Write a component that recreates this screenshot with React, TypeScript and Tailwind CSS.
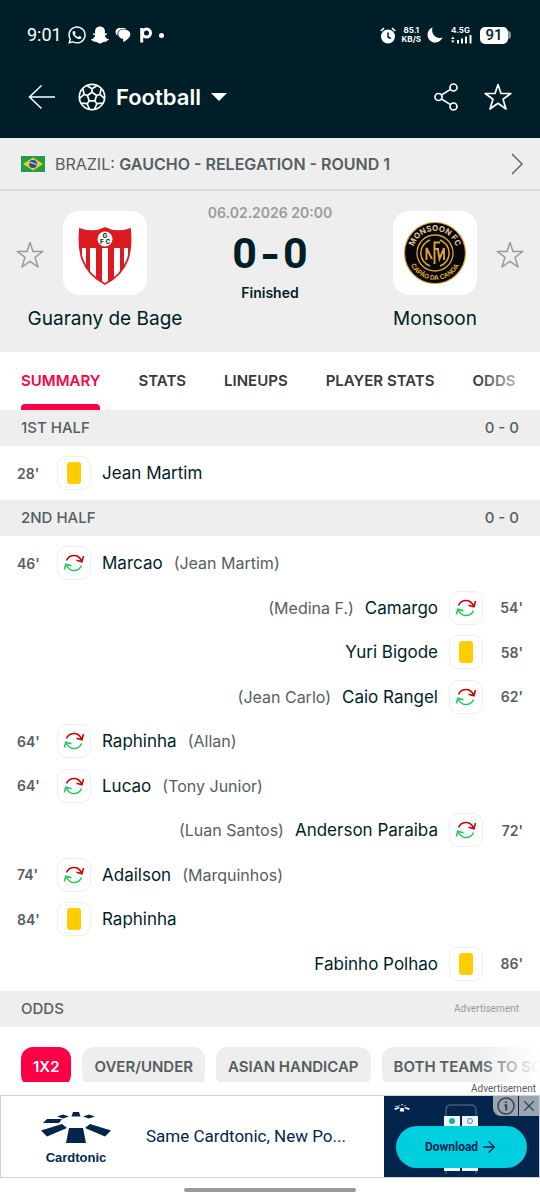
import type { ReactNode } from "react";
import { FaSnapchatGhost, FaWhatsapp } from "react-icons/fa";
import { ArrowRight, X } from "lucide-react";

type EventKind = "card" | "sub";

type MatchEvent = {
  minute: number;
  kind: EventKind;
  player: string;
  out?: string;
  away?: boolean;
};

const firstHalf: MatchEvent[] = [
  { minute: 28, kind: "card", player: "Jean Martim" },
];

const secondHalf: MatchEvent[] = [
  { minute: 46, kind: "sub", player: "Marcao", out: "Jean Martim" },
  { minute: 54, kind: "sub", player: "Camargo", out: "Medina F.", away: true },
  { minute: 58, kind: "card", player: "Yuri Bigode", away: true },
  { minute: 62, kind: "sub", player: "Caio Rangel", out: "Jean Carlo", away: true },
  { minute: 64, kind: "sub", player: "Raphinha", out: "Allan" },
  { minute: 64, kind: "sub", player: "Lucao", out: "Tony Junior" },
  { minute: 72, kind: "sub", player: "Anderson Paraiba", out: "Luan Santos", away: true },
  { minute: 74, kind: "sub", player: "Adailson", out: "Marquinhos" },
  { minute: 84, kind: "card", player: "Raphinha" },
  { minute: 86, kind: "card", player: "Fabinho Polhao", away: true },
];

const tabs = ["SUMMARY", "STATS", "LINEUPS", "PLAYER STATS", "ODDS"];
const markets = ["1X2", "OVER/UNDER", "ASIAN HANDICAP", "BOTH TEAMS TO SCORE"];

const Star = ({ className }: { className?: string }) => (
  <svg viewBox="0 0 28 28" className={className} fill="none" stroke="currentColor" strokeLinejoin="round">
    <path d="M14 1.5 L17 10.4 L26.8 10.5 L19 16.300 L22 26 L14 20.300 L6 26 L9 16.300 L1.200 10.500 L11 10.400 Z" />
  </svg>
);

const Ball = () => (
  <svg viewBox="0 0 28 28" className="w-7 h-7" fill="none" stroke="currentColor" strokeWidth="1.700" strokeLinejoin="round">
    <circle cx="14" cy="14" r="12.700" />
    <path d="M14 9.200 L18.600 12.500 L16.800 17.900 H11.200 L9.400 12.500 Z" />
    {[0, 72, 144, 216, 288].map((angle) => (
      <path key={angle} d="M14 9.200 V5.700 M8.800 2.600 L14 5.700 L19.200 2.600" transform={`rotate(${angle} 14 14)`} />
    ))}
  </svg>
);

const StatusBar = () => (
  <div className="flex items-center justify-between pl-[27px] pr-[29px] h-6">
    <div className="flex items-center">
      <span className="text-[18px] leading-6 font-['Roboto'] w-10">9:01</span>
      <FaWhatsapp className="w-5 h-5" />
      <FaSnapchatGhost className="w-[18px] h-[18px] ml-1" />
      <svg viewBox="0 0 16 16" className="w-4 h-4 ml-1.5" fill="currentColor">
        <path d="M5 1 C2 1 .3 3 .6 5.500 C.8 7 1.500 8 2.600 8.800 C2 5 4 2.500 7.500 2 L11.500 2 C10.500 1.300 9 1 7.500 1 Z" />
        <path d="M8.500 2.500 C5 2.500 3.300 4.500 3.300 7.200 C3.300 10 5.500 11.600 8 11.700 L8.300 15 C12 13 15.300 10.500 15.300 7 C15.300 4.300 12.500 2.500 8.500 2.500 Z" />
      </svg>
      <svg viewBox="0 0 14 16" className="w-3.5 h-4 ml-2" fill="none" stroke="currentColor">
        <path d="M2.700 15.500 V1" strokeWidth="3" />
        <circle cx="7.500" cy="6" r="4" strokeWidth="3" />
      </svg>
      <span className="w-[5px] h-[5px] rounded-full bg-white ml-1.5" />
    </div>
    <div className="flex items-center">
      <svg viewBox="0 0 16 17" className="w-4 h-[17px]" fill="none" stroke="currentColor">
        <circle cx="8" cy="9.500" r="7" fill="currentColor" stroke="none" />
        <path d="M.8 4 L4 1.200 M15.200 4 L12 1.200" strokeWidth="1.600" />
        <path d="M8 5.500 V10 L10.800 11.500" stroke="#001e28" strokeWidth="1.500" />
      </svg>
      <span className="flex flex-col items-center font-['Inter'] font-bold text-[8px] leading-[9px] ml-1.5">
        <span>85.1</span>
        <span>KB/S</span>
      </span>
      <svg viewBox="0 0 16 16" className="w-4 h-4 ml-1.5" fill="currentColor">
        <path d="M5.500 .5 C2.500 1.500 .5 4.500 .5 7.700 C.5 12 3.900 15.500 8.200 15.500 C11.600 15.500 14.400 13.300 15.500 10.500 C10 12.500 3.500 8 5.500 .5 Z" />
      </svg>
      <span className="flex flex-col ml-2 w-[21px]">
        <span className="font-['Inter'] font-bold text-[8px] leading-[9px]">4.5G</span>
        <svg viewBox="0 0 21 9" className="w-[21px] h-[9px]" fill="currentColor">
          <path d="M0 4 L1.800 1.500 L3.600 4 Z M0 5.500 L1.800 8 L3.600 5.500 Z M6 5 H8 V8.500 H6 Z M10 3.500 H12 V8.500 H10 Z M14 1.500 H16 V8.500 H14 Z M18.500 0 H20.500 V8.500 H18.500 Z" />
        </svg>
      </span>
      <span className="flex items-center ml-2">
        <span className="w-7 h-[17px] rounded-[5px] bg-white text-[#001e28] text-[15px] leading-[17px] font-medium text-center font-['Roboto']">91</span>
        <span className="w-[3px] h-2 rounded-r bg-[#7f8e93]" />
      </span>
    </div>
  </div>
);

const AppBar = () => (
  <div className="flex items-center px-7 h-8 mt-[34px]">
    <button aria-label="Back">
      <svg viewBox="0 0 28 26" className="w-7 h-[26px]" fill="none" stroke="currentColor" strokeWidth="1.500">
        <path d="M13.500 1.500 L1.500 13 L13.500 24.500 M1.500 13 H27" />
      </svg>
    </button>
    <button className="flex items-center ml-[22px]">
      <Ball />
      <span className="text-[22px] leading-8 font-semibold ml-2.5">Football</span>
      <svg viewBox="0 0 16 8" className="w-4 h-2 ml-2.5" fill="currentColor">
        <path d="M0 0 H16 L8 8 Z" />
      </svg>
    </button>
    <button aria-label="Share" className="ml-auto">
      <svg viewBox="0 0 24 28" className="w-6 h-7" fill="none" stroke="currentColor" strokeWidth="1.700">
        <circle cx="4.500" cy="14" r="3.500" />
        <circle cx="19.500" cy="4.500" r="3.500" />
        <circle cx="19.500" cy="23.500" r="3.500" />
        <path d="M7.500 12 L16.500 6.400 M7.500 16 L16.500 21.600" />
      </svg>
    </button>
    <button aria-label="Add match to favourites" className="ml-[26px]">
      <Star className="w-7 h-7 stroke-[1.700]" />
    </button>
  </div>
);

const Flag = () => (
  <svg viewBox="0 0 24 16" className="w-6 h-4">
    <path d="M0 0 H24 V16 H0 Z" fill="#229e45" />
    <path d="M12 1.500 L22 8 L12 14.500 L2 8 Z" fill="#e8d02c" />
    <circle cx="12" cy="8" r="4" fill="#2b49a3" />
    <path d="M8.300 6.800 C11 6.400 14 7.500 15.700 9.300" stroke="#fff" fill="none" />
  </svg>
);

const GuaranyCrest = () => (
  <svg viewBox="0 0 54 58" className="w-[54px] h-[58px] mt-1.5">
    <clipPath id="shield">
      <path d="M2 2 Q15 7 27 1 Q39 7 52 2 C54 23 52 44 27 57 C2 44 0 23 2 2 Z" />
    </clipPath>
    <g clipPath="url(#shield)">
      <path d="M0 0 H54 V58 H0 Z" fill="#dc1a22" />
      <path d="M4 21 H8 V58 H4 Z M12 21 H18 V58 H12 Z M24 21 H30 V58 H24 Z M36 21 H42 V58 H36 Z M46 21 H50 V58 H46 Z" fill="#fff" />
    </g>
    <path d="M2 2 Q15 7 27 1 Q39 7 52 2 C54 23 52 44 27 57 C2 44 0 23 2 2 Z" fill="none" stroke="#dc1a22" strokeWidth="1.800" />
    <circle cx="27" cy="12" r="7.500" fill="#fff" />
    <g fontSize="6.500" fontWeight="700" fontFamily="Inter, sans-serif" textAnchor="middle" fill="#1a1a1a">
      <text x="27" y="11">G</text>
      <text x="24" y="17">F</text>
      <text x="30" y="17">C</text>
    </g>
  </svg>
);

const MonsoonCrest = () => (
  <svg viewBox="0 0 64 64" className="w-16 h-16">
    <circle cx="32" cy="32" r="30.500" fill="#080706" stroke="#d9a43a" strokeWidth="1.200" />
    <path id="crest-top" d="M10 32 A22 22 0 0 1 54 32" fill="none" />
    <path id="crest-bottom" d="M5 32 A27 27 0 0 0 59 32" fill="none" />
    <g fontWeight="700" fontFamily="Inter, sans-serif" textAnchor="middle">
      <text fontSize="8" fill="#e0c9a0">
        <textPath href="#crest-top" startOffset="50%">MONSOON FC</textPath>
      </text>
      <text fontSize="6.500" fill="#d9a43a">
        <textPath href="#crest-bottom" startOffset="50%">CAPÃO DA CANOA</textPath>
      </text>
    </g>
    <g fill="none" stroke="#d9a43a">
      <circle cx="32" cy="32" r="18" strokeWidth="1.300" />
      <path d="M27 19 A13.800 13.800 0 0 0 27 45 M37 19 A13.800 13.800 0 0 1 37 45" strokeWidth="1.500" />
      <path d="M23.500 39 V27 L29 38 M31.500 43 V21.500 H37 M31.500 28 H36 M35 29 L36.500 38 L41 27 V39" strokeWidth="1.900" />
    </g>
  </svg>
);

const Team = ({ name, crest }: { name: string; crest: ReactNode }) => (
  <div className="flex flex-col items-center w-[168px]">
    <div className="w-[84px] h-[84px] rounded-2xl bg-white flex items-center justify-center">{crest}</div>
    <span className="text-[19px] leading-6 mt-3 whitespace-nowrap">{name}</span>
  </div>
);

const MatchHeader = () => (
  <section className="relative flex justify-between px-[21px] pt-5 pb-[21px]">
    <Team name="Guarany de Bage" crest={<GuaranyCrest />} />
    <div className="flex flex-col items-center -mt-2">
      <span className="text-[14px] leading-5 font-semibold text-[#999b9c]">06.02.2026 20:00</span>
      <span className="flex gap-[3px] text-[43px] leading-[60px] font-bold">
        <span className="font-['Roboto']">0</span>
        <span>-</span>
        <span className="font-['Roboto']">0</span>
      </span>
      <span className="text-[14px] leading-5 font-semibold">Finished</span>
    </div>
    <Team name="Monsoon" crest={<MonsoonCrest />} />
    <button aria-label="Follow Guarany de Bage" className="absolute left-4 top-[50px] text-[#999b9c]">
      <Star className="w-7 h-7 stroke-[1.500]" />
    </button>
    <button aria-label="Follow Monsoon" className="absolute right-4 top-[50px] text-[#999b9c]">
      <Star className="w-7 h-7 stroke-[1.500]" />
    </button>
  </section>
);

const SectionBar = ({ title, children }: { title: string; children: ReactNode }) => (
  <div className="flex items-center justify-between h-9 px-[21px] bg-[#eeeeee] text-[15px] leading-5 font-medium text-[#555e61]">
    <h2>{title}</h2>
    {children}
  </div>
);

const EventIcon = ({ kind }: { kind: EventKind }) => (
  <span className="w-[34px] h-[34px] rounded-[10px] border border-[#eeeeee] flex items-center justify-center shrink-0">
    {kind === "card" ? (
      <span className="w-3.5 h-[22px] rounded-[3px] bg-[#ffcd00]" />
    ) : (
      <svg viewBox="0 0 22 18" className="w-[22px] h-[18px]" fill="none" strokeWidth="1.500">
        <path d="M3.500 6.500 C6 .5 14.500 -1 18.500 6.500 M20.500 2 L19 7.800 L13.500 6.200" stroke="#c80000" />
        <path d="M18.500 11.500 C16 17.500 7.500 19 3.500 11.500 M1.300 15.500 L2.800 10.200 L8.500 11.800" stroke="#1fc65a" />
      </svg>
    )}
  </span>
);

const EventRow = ({ event }: { event: MatchEvent }) => (
  <li className={`flex items-center px-[17px] h-11 even:h-[45px] ${event.away ? "flex-row-reverse" : ""}`}>
    <span className={`w-10 text-[14px] font-semibold text-[#555e61] ${event.away ? "text-right" : ""}`}>
      {event.minute}'
    </span>
    <EventIcon kind={event.kind} />
    <span className="text-[17px] leading-6 mx-[11px]">{event.player}</span>
    {event.out && <span className="text-[16px] leading-6 text-[#555e61]">({event.out})</span>}
  </li>
);

const EventList = ({ events }: { events: MatchEvent[] }) => (
  <ul className="py-[5px]">
    {events.map((event) => (
      <EventRow key={`${event.minute}-${event.player}`} event={event} />
    ))}
  </ul>
);

const Tabs = () => (
  <nav className="relative flex gap-[38px] px-[21px] h-[58px] bg-white overflow-hidden">
    {tabs.map((tab, i) => (
      <a
        key={tab}
        href="#"
        className={`relative text-[15px] leading-[58px] font-semibold whitespace-nowrap ${i === 0 ? "text-[#ff0046]" : "text-[#37383c]"}`}
      >
        {tab}
        {i === 0 && <span className="absolute inset-x-0 bottom-0 h-1.5 rounded-t bg-[#ff0046]" />}
      </a>
    ))}
    <span className="absolute right-0 inset-y-0 w-16 bg-linear-to-r from-transparent to-white" />
  </nav>
);

const Markets = () => (
  <div className="relative flex gap-[11px] pt-5 pl-[21px] h-[55px] overflow-hidden">
    {markets.map((market, i) => (
      <button
        key={market}
        className={`h-10 px-3 rounded-xl shrink-0 text-[15px] font-semibold whitespace-nowrap ${
          i === 0 ? "bg-[#ff0046] text-white" : "bg-[#eeeeee] text-[#555e61]"
        }`}
      >
        {market}
      </button>
    ))}
    <span className="absolute right-0 inset-y-0 w-16 bg-linear-to-r from-transparent to-white" />
  </div>
);

const CardtonicMark = ({ className }: { className?: string }) => (
  <svg viewBox="0 0 70 32" className={className} fill="currentColor">
    <path d="M32 0 H38 L39.500 4.500 H30.500 Z M16 4.500 L22 2.500 L28 4.500 L22 6.500 Z M42 4.500 L48 2.500 L54 4.500 L48 6.500 Z M6 7 H21 L18 11 H2 Z M0 18.500 L21 12 L26 16 L6 24.500 Z M70 18.500 L49 12 L44 16 L64 24.500 Z M28 16 H42 L45 31 H25 Z" />
  </svg>
);

const AdBanner = () => (
  <aside className="flex h-[83px] border border-[#cfcfcf] text-[#03254c]">
    <div className="flex flex-col items-center justify-center ml-[37px] w-[76px]">
      <CardtonicMark className="w-[70px] h-8 mt-1" />
      <span className="font-['Liberation_Sans'] font-bold text-[13px] leading-4 mt-1.5">Cardtonic</span>
    </div>
    <p className="font-['Roboto'] text-[17px] leading-[81px] flex-1 ml-8 whitespace-nowrap">Same Cardtonic, New Po...</p>
    <div className="relative w-[155px] bg-[#03254c] flex items-center justify-center">
      <CardtonicMark className="absolute left-2.5 top-2 w-4 h-2 text-white" />
      <svg viewBox="0 0 34 70" className="absolute left-[60px] top-2 w-[34px] h-[70px]">
        <path d="M2 70 V6 Q2 1 7 1 H27 Q32 1 32 6 V70" fill="none" stroke="#405b7d" strokeWidth="1.500" />
        <path d="M0 12 H16 V67 H0 Z M18 12 H34 V67 H18 Z" fill="#eef5fb" />
        <circle cx="8" cy="17" r="3" fill="#17b0a8" />
        <circle cx="26" cy="17" r="2.500" fill="none" stroke="#4f7fd0" />
      </svg>
      <button className="relative w-[131px] h-[42px] mt-5 rounded-full bg-[#00cfe0] font-['Roboto'] font-bold text-[12px] flex items-center justify-center gap-0.5">
        Download
        <ArrowRight className="w-[18px] h-[18px]" strokeWidth={1.700} />
      </button>
      <span className="absolute right-0 top-0 flex gap-px text-[#3c4048]">
        <button aria-label="Ad information" className="w-[25px] h-5 bg-[#9aa5b2] rounded-bl-lg flex items-center justify-center">
          <svg viewBox="0 0 18 18" className="w-[18px] h-[18px]" fill="none" stroke="currentColor" strokeWidth="1.500">
            <circle cx="9" cy="9" r="8" />
            <path d="M9 4.500 V6 M7.500 8.200 H9.200 V13.500" strokeWidth="2" />
          </svg>
        </button>
        <button aria-label="Close ad" className="w-5 h-5 bg-[#9aa5b2] flex items-center justify-center">
          <X className="w-[18px] h-[18px]" strokeWidth={1.500} />
        </button>
      </span>
    </div>
  </aside>
);

export default function App() {
  return (
    <div className="bg-white text-[#001e28] font-['Inter',sans-serif] overflow-hidden">
      <header className="bg-[#001e28] text-white pt-[23px] pb-[25px]">
        <StatusBar />
        <AppBar />
      </header>
      <main>
        <div className="bg-[#eeeeee]">
          <a href="#" className="flex items-center h-[53px] pl-[21px] pr-[17px] border-b-2 border-[#dcdddd] text-[16px] text-[#555e61]">
            <Flag />
            <span className="ml-2.5 whitespace-nowrap">
              BRAZIL: <b className="font-semibold">GAUCHO - RELEGATION - ROUND 1</b>
            </span>
            <svg viewBox="0 0 12 22" className="w-3 h-[22px] ml-auto" fill="none" stroke="currentColor" strokeWidth="1.400">
              <path d="M1 1 L11 11 L1 21" />
            </svg>
          </a>
          <MatchHeader />
        </div>
        <Tabs />
        <SectionBar title="1ST HALF">
          <span>0 - 0</span>
        </SectionBar>
        <EventList events={firstHalf} />
        <SectionBar title="2ND HALF">
          <span>0 - 0</span>
        </SectionBar>
        <EventList events={secondHalf} />
        <SectionBar title="ODDS">
          <span className="font-['Roboto'] text-[10px] font-normal text-[#999b9c]">Advertisement</span>
        </SectionBar>
        <Markets />
      </main>
      <footer>
        <p className="text-right font-['Roboto'] text-[10px] leading-3 mt-px pr-1 text-[#555e61]">Advertisement</p>
        <AdBanner />
        <div className="flex justify-center pt-2.5 pb-2">
          <span className="w-[172px] h-1 rounded-full bg-[#999999]" />
        </div>
      </footer>
    </div>
  );
}
